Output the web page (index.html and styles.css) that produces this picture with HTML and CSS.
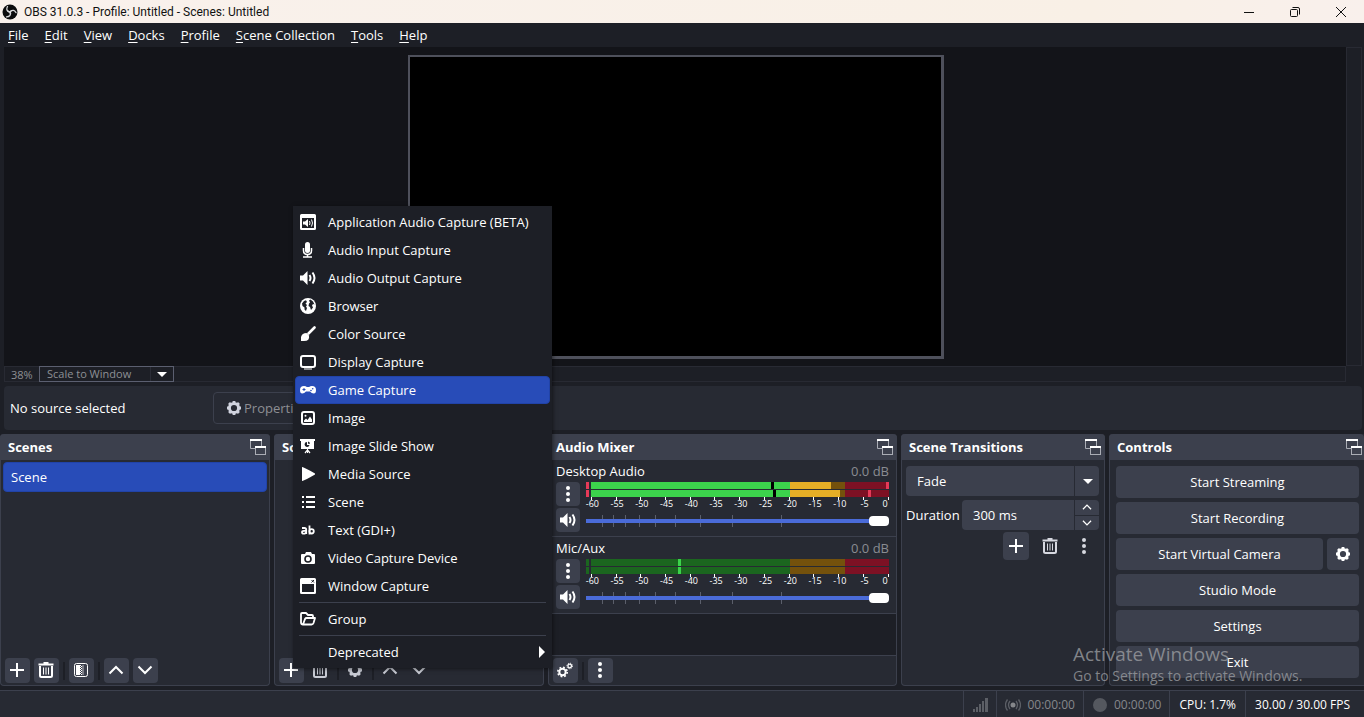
FILE: index.html
```html
<!DOCTYPE html>
<html lang="en">
<head>
<meta charset="utf-8">
<title>OBS 31.0.3 - Profile: Untitled - Scenes: Untitled</title>
<link rel="stylesheet" href="styles.css">
</head>
<body>
<svg class="sprite" aria-hidden="true">
  <symbol id="plus" viewBox="0 0 16 16"><path d="M8 1v14M1 8h14" stroke="currentColor" stroke-width="2" fill="none"/></symbol>
  <symbol id="trash" viewBox="0 0 16 16"><path d="M0.500 2.500h15M5.500 1h5" stroke="currentColor" stroke-width="2" fill="none"/><path d="M2 4v9.500q0 1.500 1.500 1.500h9q1.500 0 1.500-1.500V4" stroke="currentColor" stroke-width="2" fill="none"/><path d="M5.500 5.500v7M8 5.500v7M10.500 5.500v7" stroke="currentColor" fill="none"/></symbol>
  <symbol id="up" viewBox="0 0 16 16"><path d="M1.500 11.500L8 5l6.500 6.500" stroke="currentColor" stroke-width="2" fill="none"/></symbol>
  <symbol id="down" viewBox="0 0 16 16"><path d="M1.500 4.500L8 11l6.500-6.500" stroke="currentColor" stroke-width="2" fill="none"/></symbol>
  <symbol id="dots" viewBox="0 0 16 16"><circle cx="8" cy="2" r="2" fill="currentColor"/><circle cx="8" cy="8" r="2" fill="currentColor"/><circle cx="8" cy="14" r="2" fill="currentColor"/></symbol>
  <symbol id="gear" viewBox="0 0 16 16"><circle cx="8" cy="8" r="4.600" stroke="currentColor" stroke-width="3" fill="none"/><path d="M8 1v14M1 8h14M3 3l10 10M13 3L3 13" stroke="currentColor" stroke-width="2.800" stroke-dasharray="2.600 8.800" fill="none"/></symbol>
  <symbol id="gears" viewBox="0 0 16 16"><g fill="none" stroke="currentColor"><circle cx="5.500" cy="10" r="3.200" stroke-width="2"/><circle cx="5.500" cy="10" r="4.700" stroke-width="1.600" stroke-dasharray="1.800 1.890"/><circle cx="12.700" cy="4" r="1.800" stroke-width="1.300"/><circle cx="12.700" cy="4" r="2.800" stroke-width="1" stroke-dasharray="1.100 1.100"/></g></symbol>
  <symbol id="filter" viewBox="0 0 16 16"><rect x="1.500" y="1.500" width="13" height="13" rx="2" stroke="currentColor" fill="none"/><path fill="currentColor" d="M3 3h4v10H3zM7 3h1v1H7zM7 5h1v1H7zM7 7h1v1H7zM7 9h1v1H7zM7 11h1v1H7zM8 4h1v1H8zM8 6h1v1H8zM8 8h1v1H8zM8 10h1v1H8zM8 12h1v1H8z"/><path fill="currentColor" opacity=".35" d="M9 3h2v10H9z"/></symbol>
  <symbol id="float" viewBox="0 0 16 16"><g fill="none" stroke="#aaadb5"><path d="M11.500 7V1.500h-11v8h5"/><rect x="5.500" y="7.500" width="10" height="8"/></g><path d="M0 0h12v2H0zM5 7h11v2H5z" fill="#fff"/></symbol>
  <symbol id="caret" viewBox="0 0 10 5"><path d="M0 0h10L5 5z" fill="currentColor"/></symbol>
  <symbol id="speaker" viewBox="0 0 16 16"><path d="M0 5.500h3L7.500 1v14L3 10.500H0z" fill="currentColor"/><path d="M9.500 5q2 3 0 6M12.500 2.500q4 5.500 0 11" stroke="currentColor" stroke-width="2" fill="none"/></symbol>
  <symbol id="appaudio" viewBox="0 0 16 16"><path fill-rule="evenodd" fill="currentColor" d="M1.500 0h13Q16 0 16 1.500v13q0 1.500-1.500 1.500h-13Q0 16 0 14.500v-13Q0 0 1.500 0zM2 4v10h12V4zM3 7.500h2L8 5v8l-3-2.500H3z"/><path d="M9.500 7q1 2 0 4M11.500 5.500q2 3.500 0 7" stroke="currentColor" fill="none"/></symbol>
  <symbol id="mic" viewBox="0 0 16 16"><rect x="5" y="0" width="5" height="11" rx="2.500" fill="currentColor"/><path d="M3.500 6v2.500q0 4 4 4t4-4V6M7.500 12v3M3 15h9" stroke="currentColor" stroke-width="1.500" fill="none"/></symbol>
  <symbol id="globe" viewBox="0 0 16 16"><circle cx="8" cy="8" r="8" fill="currentColor"/><path fill="#1d1f26" d="M2 5.500L4 3l2-.7L7 4 5.500 5.500 7 7 6 8.500l1 1.500-1 3-1.500-1.500V9.500L2.500 8zM9 2.500l1.500-1L13 3.500l1.500 3L13 6l-1 1.500 1 2-2 2.500-1-3-1.500-1L9 5.500l1-1z"/></symbol>
  <symbol id="brush" viewBox="0 0 16 16"><path d="M14.500 1.500L8.500 7.500" stroke="currentColor" stroke-width="2.600" stroke-linecap="round"/><path fill="currentColor" d="M6.500 7L9 9.500Q10 15 4 15H1v-4q1-4 5.500-4z"/></symbol>
  <symbol id="display" viewBox="0 0 16 16"><rect x="1" y="2" width="14" height="11" rx="2" stroke="currentColor" stroke-width="2" fill="none"/><path d="M4 15h8" stroke="currentColor" stroke-width="1"/></symbol>
  <symbol id="gamepad" viewBox="0 0 16 16"><path fill="currentColor" d="M4 4q2 0 2.800 1h2.400q.8-1 2.800-1 4 0 4 4 0 3.500-2.200 3.500T10 9.500H6q-1.600 2-3.800 2T0 8q0-4 4-4z"/><path stroke="#284cb8" d="M2.500 7.500h3M4 6v3"/><circle cx="11" cy="8.500" r=".8" fill="#284cb8"/><circle cx="12.700" cy="6.800" r=".8" fill="#284cb8"/></symbol>
  <symbol id="image" viewBox="0 0 16 16"><rect x="2" y="2" width="12" height="12" rx="2" stroke="currentColor" stroke-width="2" fill="none"/><path fill="currentColor" d="M4 12V10.500L6 8.500l1.500 1.500L10 6.500l2 3V12z"/><circle cx="5.500" cy="5.800" r="1" fill="currentColor"/></symbol>
  <symbol id="slides" viewBox="0 0 16 16"><path fill="currentColor" d="M0 1h15v2h-1v8H1V3H0zM7 11h1v4H7z"/><path d="M7.500 12L5 15M7.500 12l2.500 3" stroke="currentColor" stroke-width="1.200"/><path fill="#1d1f26" d="M7 4v3h2.500A2.500 2.500 0 1 1 7 4zM8 3.500q2 .2 2 2.300H8z"/></symbol>
  <symbol id="play" viewBox="0 0 16 16"><path fill="currentColor" d="M2 1q1-.5 13 6.500v1Q3 15.500 2 15z"/></symbol>
  <symbol id="list" viewBox="0 0 16 16"><path d="M2 3h2M6 3h9M2 8h2M6 8h9M2 13h2M6 13h9" stroke="currentColor" stroke-width="2"/></symbol>
  <symbol id="ab" viewBox="0 0 16 16"><g fill="none" stroke="currentColor" stroke-width="1.800"><path d="M2 6h2.500q1.700 0 1.700 1.700V12M6 8.800H3.800q-1.800 0-1.800 1.400t1.700 1.400Q6 11.600 6 10M9.500 3.500V12.500"/><circle cx="11.600" cy="9.300" r="2.200"/></g></symbol>
  <symbol id="camera" viewBox="0 0 16 16"><path fill="currentColor" d="M2 4h3l1-2h5l1 2h2q1 0 1 1v8q0 1-1 1H2q-1 0-1-1V5q0-1 1-1z"/><circle cx="8" cy="9" r="3" fill="none" stroke="#1d1f26" stroke-width="1.600"/></symbol>
  <symbol id="window" viewBox="0 0 16 16"><path fill-rule="evenodd" fill="currentColor" d="M1.500 0h13Q16 0 16 1.500v13q0 1.500-1.500 1.500h-13Q0 16 0 14.500v-13Q0 0 1.500 0zM2 6v8h12V6z"/><path d="M11.500 2l2.500 2.500M14 2l-2.500 2.500" stroke="#1d1f26"/></symbol>
  <symbol id="folder" viewBox="0 0 16 16"><path d="M3 13.500q-2 0-2-2V3q0-1 1-1h4l2 2h4q1 0 1 1v2M3 13.500L5 8q.5-1 1.500-1h8.500L13.500 12q-.5 1.500-2 1.500z" stroke="currentColor" stroke-width="1.800" fill="none" stroke-linejoin="round"/></symbol>
  <symbol id="sliderticks" viewBox="0 0 303 12" preserveAspectRatio="none"><path fill="#5b5f6b" d="M16 0h1v12h-1zM27 0h1v12h-1zM39 0h1v12h-1zM53 0h1v12h-1zM69 0h1v12h-1zM89 0h1v12h-1zM114 0h1v12h-1zM146 0h1v12h-1zM195 0h1v12h-1z"/></symbol>
  <symbol id="scaleticks" viewBox="0 0 303 3" preserveAspectRatio="none"><path fill="#fff" d="M5 0h1v3H5zM30 0h1v3h-1zM54 0h1v3h-1zM79 0h1v3h-1zM104 0h1v3h-1zM128 0h1v3h-1zM153 0h1v3h-1zM178 0h1v3h-1zM203 0h1v3h-1zM227 0h1v3h-1zM252 0h1v3h-1zM277 0h1v3h-1zM302 0h1v3h-1z"/></symbol>
</svg>

<div class="app">
  <header class="titlebar">
    <svg class="logo" viewBox="0 0 16 16"><circle cx="8" cy="8" r="7.500" fill="#0c0c0e"/><g fill="none" stroke="#d8d8da" stroke-width="1.300" stroke-linecap="round"><path d="M5.500 2.500q-2 4 1.500 5.200 2 .8 1.500 2.300"/><path d="M5.500 2.500q-2 4 1.500 5.200 2 .8 1.500 2.300" transform="rotate(120 8 8)"/><path d="M5.500 2.500q-2 4 1.500 5.200 2 .8 1.500 2.300" transform="rotate(240 8 8)"/></g></svg>
    <span class="title">OBS 31.0.3 - Profile: Untitled - Scenes: Untitled</span>
    <div class="winbtns">
      <button aria-label="Minimize"><svg viewBox="0 0 10 10"><path d="M0 5.500h10" stroke="#111"/></svg></button>
      <button aria-label="Restore"><svg viewBox="0 0 10 10"><g fill="none" stroke="#111"><rect x=".5" y="2.500" width="7" height="7" rx="1"/><path d="M2.500.5H8q1.500 0 1.500 1.500v5.500"/></g></svg></button>
      <button aria-label="Close"><svg viewBox="0 0 10 10"><path d="M0 0l10 10M10 0L0 10" stroke="#111"/></svg></button>
    </div>
  </header>

  <nav class="menubar">
    <button><u>F</u>ile</button><button><u>E</u>dit</button><button><u>V</u>iew</button><button><u>D</u>ocks</button><button><u>P</u>rofile</button><button><u>S</u>cene Collection</button><button><u>T</u>ools</button><button><u>H</u>elp</button>
  </nav>

  <main class="stage">
    <div class="preview"><div class="canvas"></div></div>
    <div class="vscroll"></div>
    <div class="zoomrow">
      <span class="zoom">38%</span>
      <div class="scale">
        <select aria-label="Preview scaling"><option>Scale to Window</option></select>
        <svg><use href="#caret"/></svg>
      </div>
    </div>
  </main>

  <section class="context">
    <span class="nosource">No source selected</span>
    <button class="props" disabled><svg class="i16"><use href="#gear"/></svg>Properties</button>
  </section>

  <div class="docks">
    <section class="dock">
      <h2>Scenes<svg class="i16"><use href="#float"/></svg></h2>
      <div class="list"><button class="scene">Scene</button></div>
      <div class="tools">
        <button aria-label="Add scene"><svg class="i16"><use href="#plus"/></svg></button>
        <button aria-label="Remove scene"><svg class="i16"><use href="#trash"/></svg></button>
        <i></i>
        <button aria-label="Scene filters"><svg class="i16"><use href="#filter"/></svg></button>
        <i></i>
        <button aria-label="Move scene up"><svg class="i16"><use href="#up"/></svg></button>
        <button aria-label="Move scene down"><svg class="i16"><use href="#down"/></svg></button>
      </div>
    </section>

    <section class="dock sources">
      <h2>Sources</h2>
      <div class="list"></div>
      <div class="tools">
        <button aria-label="Add source"><svg class="i16"><use href="#plus"/></svg></button>
        <button disabled aria-label="Remove source"><svg class="i16"><use href="#trash"/></svg></button>
        <i></i>
        <button disabled aria-label="Source properties"><svg class="i16"><use href="#gear"/></svg></button>
        <i></i>
        <button disabled aria-label="Move source up"><svg class="i16"><use href="#up"/></svg></button>
        <button disabled aria-label="Move source down"><svg class="i16"><use href="#down"/></svg></button>
      </div>
      <div class="popup" role="menu">
        <button role="menuitem"><svg class="i16"><use href="#appaudio"/></svg>Application Audio Capture (BETA)</button>
        <button role="menuitem"><svg class="i16"><use href="#mic"/></svg>Audio Input Capture</button>
        <button role="menuitem"><svg class="i16"><use href="#speaker"/></svg>Audio Output Capture</button>
        <button role="menuitem"><svg class="i16"><use href="#globe"/></svg>Browser</button>
        <button role="menuitem"><svg class="i16"><use href="#brush"/></svg>Color Source</button>
        <button role="menuitem"><svg class="i16"><use href="#display"/></svg>Display Capture</button>
        <button role="menuitem" class="active"><svg class="i16"><use href="#gamepad"/></svg>Game Capture</button>
        <button role="menuitem"><svg class="i16"><use href="#image"/></svg>Image</button>
        <button role="menuitem"><svg class="i16"><use href="#slides"/></svg>Image Slide Show</button>
        <button role="menuitem"><svg class="i16"><use href="#play"/></svg>Media Source</button>
        <button role="menuitem"><svg class="i16"><use href="#list"/></svg>Scene</button>
        <button role="menuitem"><svg class="i16"><use href="#ab"/></svg>Text (GDI+)</button>
        <button role="menuitem"><svg class="i16"><use href="#camera"/></svg>Video Capture Device</button>
        <button role="menuitem"><svg class="i16"><use href="#window"/></svg>Window Capture</button>
        <hr>
        <button role="menuitem"><svg class="i16"><use href="#folder"/></svg>Group</button>
        <hr>
        <button role="menuitem"><svg class="i16"></svg>Deprecated<svg class="arrow" viewBox="0 0 6 12"><path d="M0 0l6 6-6 6z" fill="#fff"/></svg></button>
      </div>
    </section>

    <section class="dock mixer">
      <h2>Audio Mixer<svg class="i16"><use href="#float"/></svg></h2>
      <div class="channel">
        <div class="chead"><label for="desk">Desktop Audio</label><span>0.0 dB</span></div>
        <div class="cbody">
          <div class="cbtns">
            <button aria-label="Desktop Audio options"><svg class="i16"><use href="#dots"/></svg></button>
            <button aria-label="Mute Desktop Audio"><svg class="i16"><use href="#speaker"/></svg></button>
          </div>
          <div class="meters">
            <svg class="bars" viewBox="0 0 303 15" preserveAspectRatio="none">
              <path fill="#e63a58" d="M0 0h3v7H0zM0 8h3v7H0z"/>
              <path fill="#3cd34c" d="M5 0h199v7H5zM5 8h199v7H5z"/>
              <path fill="#000" d="M185 0h3v7h-3zM187 8h3v7h-3z"/>
              <path fill="#74510c" d="M204 0h55v7h-55zM204 8h55v7h-55z"/>
              <path fill="#e5ae26" d="M204 0h41v7h-41zM204 8h50v7h-50z"/>
              <path fill="#7d1124" d="M259 0h44v7h-44zM259 8h44v7h-44z"/>
              <path fill="#e63a58" d="M300 0h3v7h-3zM282 8h3v7h-3z"/>
            </svg>
            <svg class="ticks"><use href="#scaleticks"/></svg>
            <div class="scale-labels"><span>-60</span><span>-55</span><span>-50</span><span>-45</span><span>-40</span><span>-35</span><span>-30</span><span>-25</span><span>-20</span><span>-15</span><span>-10</span><span>-5</span><span>0</span></div>
            <div class="fader"><svg><use href="#sliderticks"/></svg><input id="desk" type="range" value="100"></div>
          </div>
        </div>
      </div>
      <div class="channel">
        <div class="chead"><label for="mic-vol">Mic/Aux</label><span>0.0 dB</span></div>
        <div class="cbody">
          <div class="cbtns">
            <button aria-label="Mic/Aux options"><svg class="i16"><use href="#dots"/></svg></button>
            <button aria-label="Mute Mic/Aux"><svg class="i16"><use href="#speaker"/></svg></button>
          </div>
          <div class="meters">
            <svg class="bars" viewBox="0 0 303 15" preserveAspectRatio="none">
              <path fill="#1b661f" d="M0 0h3v7H0zM0 8h3v7H0zM5 0h199v7H5zM5 8h199v7H5z"/>
              <path fill="#3cd34c" d="M92 0h3v7h-3zM92 8h3v7h-3z"/>
              <path fill="#74510c" d="M204 0h55v7h-55zM204 8h55v7h-55z"/>
              <path fill="#7d1124" d="M259 0h44v7h-44zM259 8h44v7h-44z"/>
            </svg>
            <svg class="ticks"><use href="#scaleticks"/></svg>
            <div class="scale-labels"><span>-60</span><span>-55</span><span>-50</span><span>-45</span><span>-40</span><span>-35</span><span>-30</span><span>-25</span><span>-20</span><span>-15</span><span>-10</span><span>-5</span><span>0</span></div>
            <div class="fader"><svg><use href="#sliderticks"/></svg><input id="mic-vol" type="range" value="100"></div>
          </div>
        </div>
      </div>
      <div class="void"></div>
      <div class="tools">
        <button aria-label="Advanced audio"><svg class="i16"><use href="#gears"/></svg></button>
        <i></i>
        <button aria-label="Mixer menu"><svg class="i16"><use href="#dots"/></svg></button>
      </div>
    </section>

    <section class="dock">
      <h2>Scene Transitions<svg class="i16"><use href="#float"/></svg></h2>
      <div class="trans">
        <div class="combo">
          <select aria-label="Transition"><option>Fade</option></select>
          <svg><use href="#caret"/></svg>
        </div>
        <div class="duration">
          <label for="dur">Duration</label>
          <div class="spin">
            <input id="dur" type="text" value="300 ms">
            <div class="steps">
              <button aria-label="Increase"><svg><use href="#up"/></svg></button>
              <button aria-label="Decrease"><svg><use href="#down"/></svg></button>
            </div>
          </div>
        </div>
        <div class="tbtns">
          <button class="on" aria-label="Add transition"><svg class="i16"><use href="#plus"/></svg></button>
          <button aria-label="Remove transition"><svg class="i16"><use href="#trash"/></svg></button>
          <button aria-label="Transition menu"><svg class="i16"><use href="#dots"/></svg></button>
        </div>
      </div>
    </section>

    <section class="dock last">
      <h2>Controls<svg class="i16"><use href="#float"/></svg></h2>
      <div class="controls">
        <button>Start Streaming</button>
        <button>Start Recording</button>
        <div class="pair"><button>Start Virtual Camera</button><button aria-label="Virtual camera settings"><svg class="i16"><use href="#gear"/></svg></button></div>
        <button>Studio Mode</button>
        <button>Settings</button>
        <button>Exit</button>
      </div>
    </section>
  </div>

  <footer class="status">
    <div class="net"><svg class="i16" viewBox="0 0 16 16"><path fill="#5c5f66" d="M1 12h2v3H1zM4 10h2v5H4zM7 7h2v8H7zM10 4h2v11h-2zM13 1h3v14h-3z"/></svg></div>
    <div class="dim"><svg class="i16" viewBox="0 0 16 16"><circle cx="8" cy="8" r="2.500" fill="#85878b"/><g fill="none" stroke="#5c5f66" stroke-width="1.300"><path d="M5 4q-3 4 0 8M11 4q3 4 0 8M2.500 2.500q-4 5.500 0 11M13.500 2.500q4 5.500 0 11"/></g></svg>00:00:00</div>
    <div class="dim"><svg class="i16" viewBox="0 0 16 16"><circle cx="8" cy="8" r="7" fill="#55585f"/></svg>00:00:00</div>
    <div>CPU: 1.7%</div>
    <div>30.00 / 30.00 FPS</div>
  </footer>
</div>

<div class="watermark"><strong>Activate Windows</strong><span>Go to Settings to activate Windows.</span></div>
</body>
</html>
```
FILE: styles.css
```css
* { box-sizing: border-box; }
body { margin: 0; background: #1d1f26; color: #fff; font: 13px/18px "Open Sans", "Noto Sans", sans-serif; overflow: hidden; }
button, input, select { font: inherit; color: inherit; border: 0; padding: 0; margin: 0; background: none; }
svg { display: block; flex: none; }
.sprite { position: absolute; width: 0; height: 0; }
.i16 { width: 16px; height: 16px; }
.app { display: flex; flex-direction: column; height: 100vh; min-height: 600px; }

.titlebar { display: flex; align-items: center; height: 23px; padding-left: 2px; background: linear-gradient(90deg, #f9f1ec, #f9f0e6 80%, #f9f0ec); color: #111; font-family: Roboto, "Open Sans", sans-serif; font-size: 12px; }
.logo { width: 16px; height: 16px; margin-right: 6px; }
.winbtns { display: flex; margin-left: auto; }
.winbtns button { display: grid; place-items: center; width: 46px; height: 22px; }
.winbtns svg { width: 10px; height: 10px; }

.menubar { display: flex; height: 24px; }
.menubar button { padding: 0 8px; }
u { text-underline-offset: 2px; }

.stage { flex: 1; min-height: 0; display: grid; grid-template: 1fr 16px / 1fr 16px; padding: 0 2px 0 4px; }
.preview { min-height: 0; background: #131419; display: flex; justify-content: center; padding: 8px 0 7px 2px; }
.canvas { height: 100%; aspect-ratio: 536 / 304; background: #000; border: 2px solid #4e505b; border-width: 2px 3px 3px 2px; }
.vscroll { border: 1px solid #282a33; }
.zoomrow { display: flex; border: 1px solid #282a33; color: #8e9095; font-size: 11px; line-height: 14px; }
.zoom { width: 34px; padding-left: 6px; padding-top: 1px; }
.scale { display: grid; margin: -1px 0; width: 135px; height: 16px; border: 1px solid #5b5f70; }
.scale select, .combo select { grid-area: 1 / 1; appearance: none; width: 100%; outline: 0; }
.scale select { padding-left: 7px; background: linear-gradient(#2b2d37, #2b2d37) 110px 0 / 1px 100% no-repeat; }
.scale svg { grid-area: 1 / 1; justify-self: end; align-self: center; width: 10px; height: 5px; margin-right: 6px; color: #fff; }

.context { display: flex; align-items: center; height: 44px; margin: 4px 2px 4px 4px; padding-left: 6px; background: #272a33; border-radius: 4px; }
.nosource { width: 203px; }
.props { display: flex; align-items: center; gap: 2px; height: 32px; padding: 0 12px; border: 1px solid #3c404d; border-radius: 4px; color: #8e8f94; }
.props svg { color: #d0d3de; }

.docks { display: grid; grid-template-columns: 270fr 270fr 349fr 204fr 255fr; gap: 4px; }
.dock { position: relative; display: flex; flex-direction: column; min-width: 0; background: #272a33; border: 1px solid #3c404d; border-top: 0; border-radius: 4px; }
.dock h2 { display: flex; align-items: center; justify-content: space-between; height: 26px; margin: 0 -1px; padding: 0 4px 0 8px; background: #3c404d; border-radius: 4px 4px 0 0; font-size: 13px; font-weight: 700; }
.last { border-right: 0; border-radius: 4px 0 0 4px; }
.last h2 { margin-right: 0; padding-right: 2px; }
.list { flex: 1; padding: 2px; }
.scene { display: block; width: 100%; height: 30px; padding: 0 7px; text-align: left; background: #284cb8; border: 1px solid #2143a8; border-radius: 4px; }
.tools { display: flex; align-items: center; gap: 4px; padding: 2px 4px; }
.tools button { display: grid; place-items: center; width: 25px; height: 25px; padding: 0 1px 1px 0; border-radius: 4px; background: #3c404d; }
.tools button:disabled { background: none; color: #c8cbd4; }
.tools i { width: 2px; height: 18px; background: #1d1f26; }

.popup { position: absolute; left: 18px; bottom: 17px; width: 259px; padding: 2px; background: #1d1f26; box-shadow: 1px 1px 4px rgba(0, 0, 0, .5); z-index: 2; }
.popup button { display: flex; align-items: center; gap: 12px; width: 100%; height: 28px; padding: 0 5px; border-radius: 4px; text-align: left; }
.popup .active { background: #284cb8; border: 1px solid #2143a8; padding: 0 4px; }
.popup hr { margin: 2px 4px; border: 0; height: 1px; background: #3c404d; }
.popup .arrow { width: 6px; height: 12px; margin-left: auto; }

.channel { min-height: 77px; padding: 2px 7px 4px; border-bottom: 1px solid #3c404d; }
.chead { display: flex; justify-content: space-between; height: 20px; }
.chead span { color: #8a8c92; }
.cbody { display: flex; gap: 6px; }
.cbtns { display: grid; gap: 2px; }
.cbtns button { display: grid; place-items: center; width: 24px; height: 24px; border-radius: 4px; background: #3c404d; }
.meters { flex: 1; min-width: 0; display: flex; flex-direction: column; }
.bars { width: 100%; height: 15px; }
.ticks { width: 100%; height: 3px; }
.scale-labels { display: grid; grid-template-columns: repeat(12, 1fr) 16px; margin: -2px -4px 0 -6px; text-align: center; font-size: 9px; line-height: 11px; }
.fader { display: grid; align-items: center; height: 12px; margin-top: 6px; }
.fader svg, .fader input { grid-area: 1 / 1; width: 100%; height: 12px; }
.fader input { appearance: none; background: linear-gradient(#4a6bd8, #4a6bd8) 0 4px / 100% 4px no-repeat; border-radius: 2px; }
.fader input::-webkit-slider-thumb { appearance: none; width: 20px; height: 10px; border-radius: 4px; background: #fff; }
.void { flex: 1; background: #1d1f26; border-bottom: 1px solid #3c404d; }

.trans { display: grid; gap: 4px; padding: 6px 4px; }
.combo { display: grid; height: 30px; margin-right: 1px; background: #3c404d; border-radius: 4px; }
.combo select { padding-left: 11px; border-right: 24px solid transparent; box-shadow: inset -1px 0 #272a33; background-clip: padding-box; }
.combo svg { grid-area: 1 / 1; justify-self: end; align-self: center; width: 10px; height: 5px; margin-right: 6px; }
.duration { display: flex; align-items: center; justify-content: space-between; margin-right: 1px; }
.spin { flex: none; width: 137px; height: 30px; display: grid; grid-template-columns: 1fr 24px; background: #3c404d; border-radius: 4px; }
.spin input { min-width: 0; padding-left: 11px; border-right: 1px solid #272a33; }
.steps { display: grid; }
.steps button { display: grid; place-items: center; }
.steps button + button { border-top: 1px solid #272a33; }
.steps svg { width: 10px; height: 10px; }
.tbtns { display: flex; justify-content: flex-end; gap: 8px; margin-top: -2px; padding-right: 3px; }
.tbtns button { display: grid; place-items: center; width: 26px; height: 28px; border-radius: 4px; color: #d6d8e0; }
.tbtns .on { background: #3c404d; color: #fff; }

.controls { display: grid; gap: 4px; padding: 6px 5px 7px 6px; }
.controls button { display: grid; place-items: center; height: 32px; background: #3c404d; border-radius: 4px; }
.pair { display: grid; grid-template-columns: 1fr 32px; gap: 4px; }

.status { display: flex; justify-content: flex-end; height: 27px; margin-top: 4px; padding-right: 5px; background: #272a33; border-top: 1px solid #3c404d; font-size: 12px; }
.status div { display: flex; align-items: center; padding: 2px 9px 0; border-left: 1px solid #3c404d; }
.status .net { padding: 2px 8px 0; }
.status .dim { gap: 6px; padding: 2px 8px 0; color: #85878b; }

.watermark { position: absolute; right: 55px; bottom: 31px; display: grid; width: 236px; color: rgba(160, 162, 166, .75); pointer-events: none; z-index: 3; }
.watermark strong { font-size: 19px; line-height: 24px; font-weight: 400; }
.watermark span { font-size: 14px; line-height: 20px; }
```
